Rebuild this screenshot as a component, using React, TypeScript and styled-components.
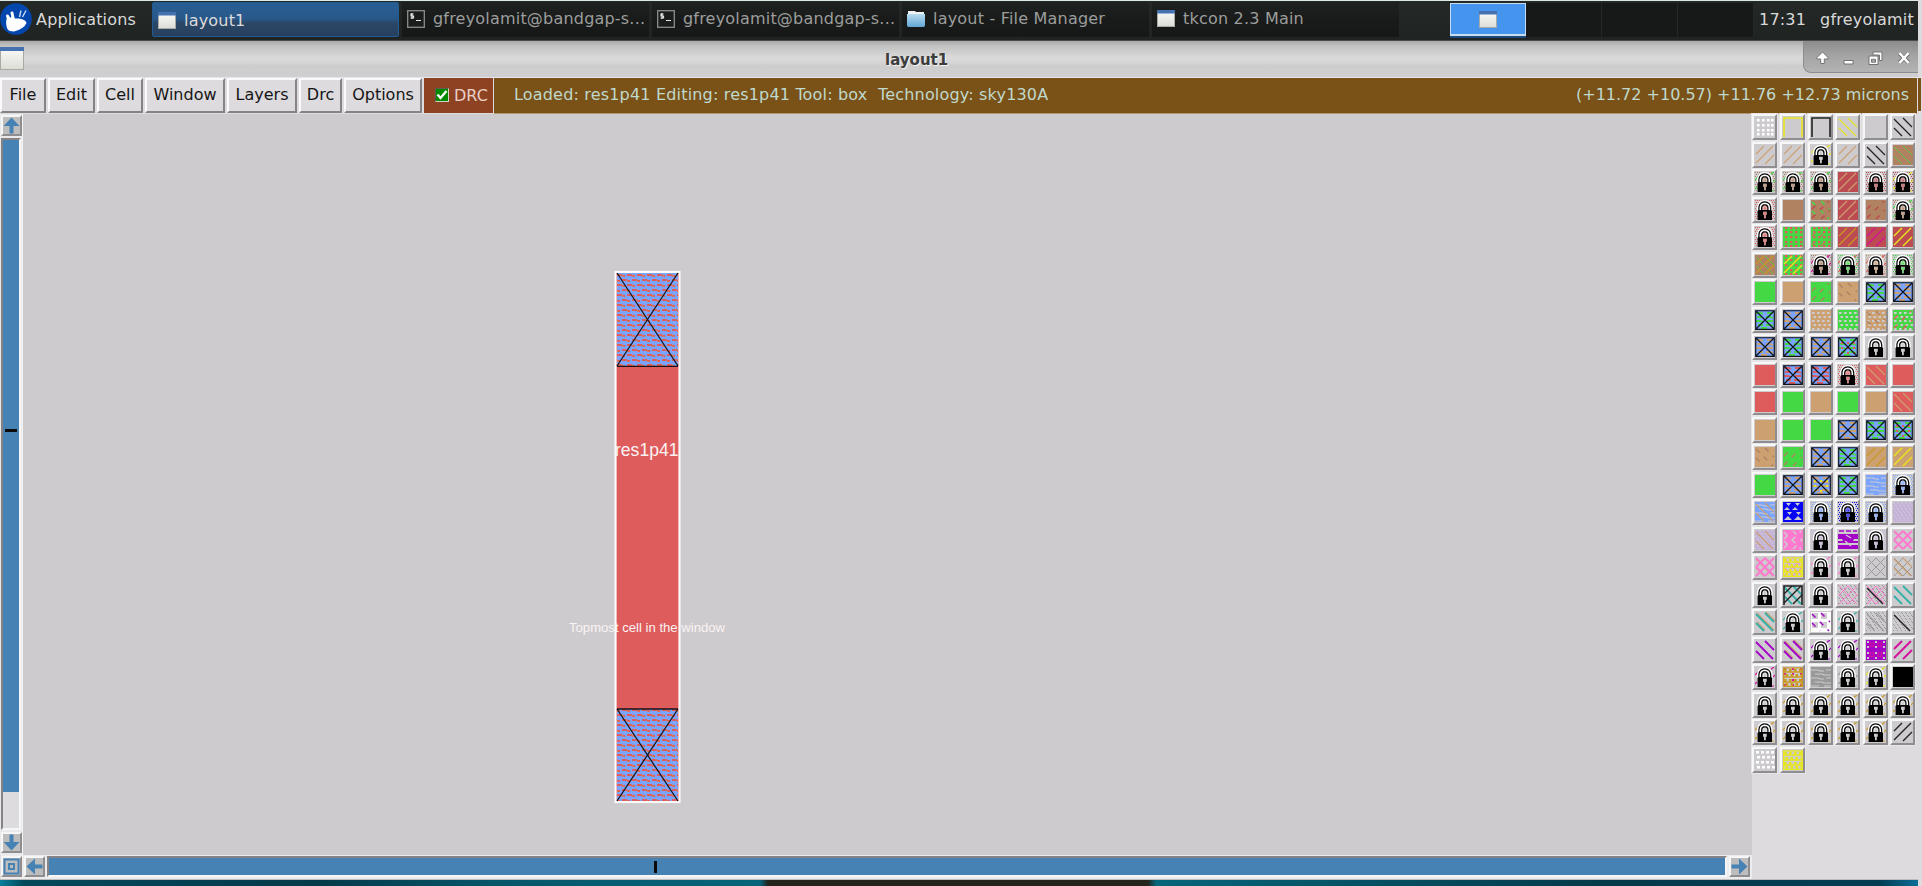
import React from "react";
import styled, { createGlobalStyle, css } from "styled-components";

const Global = createGlobalStyle`
  * { box-sizing: border-box; }
  html, body { margin: 0; padding: 0; overflow: hidden; }
  body { font-family: "DejaVu Sans", sans-serif; font-size: 16px; background: #dddbde; }
  svg { display: block; flex: none; }
`;

const Desktop = styled.div`
  display: grid;
  grid-template-rows: 41px 36px 37px 741px 25px 6px;
  width: 1922px;
  height: 886px;
  overflow: hidden;
  background: #dddbde;
`;

/* ---------- top panel ---------- */

const Panel = styled.header`
  display: flex;
  border-top: 1px solid #dce8e6;
  border-bottom: 1px solid #4a4a4a;
  background: linear-gradient(#242826, #1f2321);
  color: #d9d9d9;
  width: 1918px;
  letter-spacing: 0.2px;
`;

const AppsMenu = styled.div`
  display: flex;
  align-items: center;
  gap: 4px;
  width: 152px;
  padding-bottom: 3px;
`;

const TaskButton = styled.div<{ $active?: boolean }>`
  display: flex;
  align-items: center;
  width: 247px;
  height: 35px;
  margin: 1px 3px 0 0;
  padding: 0 0 2px 5px;
  gap: 8px;
  white-space: nowrap;
  color: #9c9d9c;
  background: linear-gradient(#1e2120 0%, #191b1a 50%, #161817 100%);
  ${(p) =>
    p.$active &&
    css`
      color: #dcdcdc;
      padding-top: 3px;
      border: 1px solid #215b93;
      border-radius: 2px;
      background: linear-gradient(#295e93 0%, #29588a 48%, #2a4768 60%, #28405e 100%);
    `}
`;

const Pager = styled.div`
  display: flex;
  margin-left: 48px;
  height: 36px;
`;

const PagerCell = styled.div<{ $active?: boolean }>`
  display: flex;
  align-items: center;
  justify-content: center;
  width: 76px;
  margin: 2px 0 0;
  height: 34px;
  background: #171918;
  border-right: 1px solid #252827;
  ${(p) =>
    p.$active &&
    css`
      height: 33px;
      border: 1px solid #c8dcf0;
      border-bottom-width: 2px;
      background: #4595ee;
      box-shadow: 0 2px 0 #1d4a7c;
    `}
`;

const PanelText = styled.div<{ $left: number }>`
  display: flex;
  align-items: center;
  padding-bottom: 3px;
  margin-left: ${(p) => p.$left}px;
  white-space: nowrap;
`;

/* ---------- title bar ---------- */

const TitleBar = styled.div`
  display: flex;
  width: 1918px;
  background: linear-gradient(#a9a9a9 0%, #c2c2c2 14%, #dadada 46%, #d4d4d4 62%, #cdcdcd 68%, #cfcfcf 100%);
`;

const TitleIcon = styled.div`
  width: 885px;
  padding-top: 6px;
`;

const Title = styled.div`
  padding-top: 10px;
  font-size: 15px;
  line-height: 18px;
  font-weight: bold;
  color: #3c3c3c;
  text-shadow: 1px 1px 0 #f2f2f2;
`;

const WindowButtons = styled.div`
  display: flex;
  align-items: center;
  justify-content: space-between;
  width: 115px;
  height: 32px;
  margin-left: auto;
  padding: 3px 7px 0 12px;
  border: 1px solid #8d8d8d;
  border-top: 0;
  border-right: 0;
  border-radius: 0 0 0 8px;
  background: linear-gradient(#8c8c8c, #a5a5a5 50%, #b3b3b3);
`;

/* ---------- menu row ---------- */

const MenuRow = styled.nav`
  display: flex;
  align-items: flex-start;
  gap: 2px;
  width: 1922px;
  border-top: 1px solid #e6e4ee;
  background: #dddbde;
`;

const MenuButton = styled.div<{ $w: number }>`
  width: ${(p) => p.$w}px;
  height: 35px;
  line-height: 30px;
  text-align: center;
  color: #151515;
  background: #dddbde;
  border: 2px solid;
  border-color: #fafafa #858385 #858385 #fafafa;
`;

const DrcToggle = styled.div`
  display: flex;
  align-items: center;
  gap: 5px;
  width: 69px;
  height: 35px;
  padding: 0 0 1px 11px;
  margin-right: -1px;
  color: #e9cfc6;
  background: #8d4222;
`;

const CheckBox = styled.div`
  width: 14px;
  height: 14px;
  background: #008a00;
  border: 1px solid #d5d5c5;
  border-color: #5d5a50 #d5d5c5 #d5d5c5 #5d5a50;
`;

const StatusBar = styled.div`
  display: flex;
  justify-content: space-between;
  width: 1423px;
  height: 36px;
  padding: 0 8px 0 20px;
  line-height: 34px;
  white-space: pre;
  color: #bfd9cd;
  background: #7a5117;
  border-bottom: 1px solid #b49672;
`;

const StatusText = styled.span`
  letter-spacing: 0.18px;
`;

const NextWindow = styled.div`
  width: 3px;
  height: 33px;
  margin-left: -1px;
  background: #7a5117;
`;

/* ---------- work area ---------- */

const WorkArea = styled.main`
  display: grid;
  grid-template-columns: 23px 1729px 170px;
`;

const VerticalBar = styled.div`
  display: flex;
  flex-direction: column;
  align-items: flex-start;
  gap: 2px;
  padding: 1px 0 0 1px;
  background: #e9e8ea;
  border-right: 1px solid #f4f4f4;
`;

const ArrowButton = styled.div`
  display: flex;
  align-items: center;
  justify-content: center;
  width: 21px;
  height: 21px;
  background: #bebdbe;
  border: 2px solid;
  border-color: #f6f6f6 #8f8d8f #8f8d8f #f6f6f6;
  flex: none;
`;

const VerticalTrough = styled.div`
  width: 20px;
  height: 692px;
  background: #dddbde;
  border: 2px solid;
  border-color: #858385 #f6f6f6 #f6f6f6 #858385;
`;

const VerticalThumb = styled.div`
  display: flex;
  align-items: center;
  justify-content: center;
  height: 652px;
  padding-bottom: 72px;
  background: #4682b4;
`;

const HorizontalBar = styled.div`
  display: flex;
  width: 1918px;
  padding: 0 0 0 1px;
  background: #dddbde;
  border-bottom: 1px solid #bcbcbc;
`;

const BarInner = styled.div`
  display: flex;
  gap: 2px;
  width: 1751px;
  height: 24px;
  padding-top: 1px;
  background: #ecebed;
`;

const HorizontalThumb = styled.div`
  width: 1680px;
  height: 21px;
  padding-left: 605px;
  display: flex;
  align-items: center;
  background: #4682b4;
  border: 2px solid;
  border-color: #858385 #f6f6f6 #f6f6f6 #858385;
`;

const Tick = styled.div<{ $w: number; $h: number }>`
  width: ${(p) => p.$w}px;
  height: ${(p) => p.$h}px;
  background: #0b0b0b;
`;

const Palette = styled.aside`
  display: grid;
  grid-template-columns: repeat(6, 27.6px);
  grid-auto-rows: 27.5px;
  align-content: start;
  padding-left: 0.4px;
  background: #dddbde;
`;

const Swatch = styled.div`
  width: 25px;
  height: 26px;
  padding: 1px 0 0 1px;
  background: #cdcbce;
  border: 2px solid;
  border-color: #f8f7f8 #8f8d8f #8f8d8f #f8f7f8;
  outline: 1px solid #e6e5e7;
`;

const BottomStrip = styled.div`
  width: 1918px;
  background: linear-gradient(90deg, #087f9c 0, #04485a 24px, #053a4a 320px, #06566a 500px, #06657a 760px, #23241c 768px, #23241c 1148px, #06657a 1156px, #053a4a 1600px, #043d52 1880px, #0a6d96 1918px);
`;

/* ---------- layer swatches ---------- */

const colors: Record<string, string> = {
  g: "#44d944", t: "#cda071", r: "#bd4c52", R: "#de5c5c", n: "#b08262", u: "#7ba4ff",
  y: "#e8e71c", k: "#222222", m: "#d4109c", p: "#a404c8", P: "#ff78cf", l: "#c5b2d8",
  B: "#0606f5", c: "#35b0a8", o: "#c99a22", z: "#999999", w: "#ffffff", h: "#cdcbce",
  K: "#000000",
};

// Every entry is a list of layers, each a kind and the letters of its colours.
const layers: string[] = (
  "dots4:w|corner:y|corner:k|back:y|none|backB:k|" +
  "fwd:t|fwd:t|lock:hy|fwd:t|backB:k|fill:n,backS:g|" +
  "lock:ng|lock:ng|lock:ng|fill:r,fwd:t|lock:rh|lock:ry|" +
  "lock:Rh|fill:n|fill:n,backD:g,fwdD:r|fill:r,fwd:t|fill:n,fwdD:r|lock:ng|" +
  "lock:Rh|fill:g,dots:R|fill:g,dots:R,fwdD:n|fill:r,fwd:o|fill:r,fwd:m|fill:r,fwdB:y|" +
  "fill:n,backS:g,fwd:o|fill:g,dots:R,fwdB:y|lock:nm|lock:gR|lock:tR|lock:gh|" +
  "fill:g|fill:t|fill:g,fwdD:n|fill:t,backD:n|cross:g|cross:t|" +
  "cross:g|cross:t|fill:t,holes:h|fill:g,holes:h|fill:t,holes:h,backD:n|fill:g,holes:h,fwdD:R|" +
  "cross:t|cross:g|cross:t|cross:gR|lock:hh|lock:hh|" +
  "fill:R|cross:R|cross:R|lock:Rh|fill:R,back:t|fill:R|" +
  "fill:R|fill:g|fill:t|fill:g|fill:t|fill:R,back:t|" +
  "fill:t|fill:g|fill:g|cross:t|cross:g|cross:gR|" +
  "fill:t,backD:n|fill:g,fwdD:n|cross:t|cross:g|fill:t,fwd:o|fill:t,fwdB:y|" +
  "fill:g|cross:t|cross:ty|cross:g|fill:u,waves:h|lock:uh|" +
  "fill:u,waves:h,back:t|tri:B|lock:uh|lock:Bh|lock:uh|fill:l,noise:h|" +
  "fill:l,noise:h,back:t|fill:P,fwdD:h,backD:h|lock:lh|bars:p|lock:lh|hatch:P|" +
  "back:t,hatch:P|hatchT:P,sieve:y|lock:hP|lock:hP|hatchT:z|hatchT:z,back:t|" +
  "lock:hh|backT:c,fwdB:k,corner:k|lock:hh|noise:z,hatchT:P|noise:z,hatchT:P,mid:k|backT:c|" +
  "backO:t,backT:c|lock:hc|fill:w,squares:h,backD:p|lock:hc|noise:z,back:z|noise:z,mid:k|" +
  "backT:p|backO:t,backT:p|lock:hp|lock:hp|fill:p,rings:m,spots:h|fwdT:m|" +
  "lock:hm|spots:m,sieve:o|fill:z,waves:h|lock:hz|lock:hy|fill:K|" +
  "lock:hh|lock:ho|lock:ho|lock:ho|lock:ho|lock:ho|" +
  "lock:ho|lock:ho|lock:ho|lock:ho|lock:ho|fwdB:k|" +
  "dots5:w|sieve:y"
).split("|");

const grid = (xs: number[], ys: number[], w: number, h: number, shift = 0) =>
  ys.map((y, j) => xs.map((x) => `M${x + (j % 2 ? shift : 0)} ${y}h${w}v${h}h-${w}z`).join("")).join("");

const BACK_MAIN = "M1 2L18 19M10 1L19 10M1 11L9 19";
const FWD_MAIN = "M1 18L18 1M1 9L9 1M10 19L19 10";
const LATTICE = "M1 1L19 19M10 1L19 10M1 10L10 19M1 19L19 1M1 10L10 1M10 19L19 10";
const SPECK = grid([0, 4, 8, 12, 16], [0, 3, 6, 9, 12, 15, 18], 1, 1, 2);
const SHACKLE = "M5.3 10.5V7.5Q5.8 3.4 9.8 3.2Q13.8 3.4 14.3 7.5V10.5";

function Padlock({ a, b }: { a: string; b: string }) {
  return (
    <>
      {a !== colors.h && <path d={grid([0, 2, 4, 6, 8, 10, 12, 14, 16, 18], [0, 2, 4, 6, 8, 10, 12, 14, 16, 18], 1, 1, 1)} fill={a} />}
      {b !== colors.h && <path d="M0 8L4 4M15 3L19 0M0 17L2 15M18 10L20 8M8 1L10 0M17 19h2" stroke={b} strokeWidth="1.2" />}
      <path d={SHACKLE} fill="none" stroke="#fafafa" strokeWidth="6.8" />
      <path d={SHACKLE} fill={a} fillOpacity=".5" stroke="#080808" strokeWidth="4" />
      <path d={SHACKLE} fill="none" stroke="#fff" strokeWidth="1.5" />
      <path d="M3.6 10H16L17 11V20H2.6V11Z" fill="#000" />
      <path d="M8 11.7h3.8v3h-1v3.6h-1.8v-3.6h-1z" fill={colors.h} />
      {a !== colors.h && <path d="M8 11.7h3.8v3h-1v3.6h-1.8v-3.6h-1z" fill={a} opacity=".6" />}
    </>
  );
}

function Contact({ a, b }: { a: string; b?: string }) {
  return (
    <>
      <rect width="20" height="20" fill={colors.u} />
      <path d="M1 3h5l2 1M12 3h6M2 7h5M11 7h4l3 1M1 11h4l3 1M12 11h6M3 15h5M11 15h5l2 1M6 18h6" stroke={a} strokeWidth="1.8" fill="none" />
      {b && <path d={grid([3, 9, 15], [5, 10, 15], 2, 2)} fill={b} />}
      <path d="M.7 .7H19.3V19.3H.7ZM1 1L19 19M19 1L1 19" fill="none" stroke="#10141c" strokeWidth="1.15" />
    </>
  );
}

function Layer({ kind, names }: { kind: string; names: string }) {
  const c = colors[names[0]];
  const line = (d: string, w: number, dash?: string) => (
    <path d={d} stroke={c} strokeWidth={w} strokeDasharray={dash} fill="none" />
  );
  switch (kind) {
    case "fill": return <rect width="20" height="20" fill={c} />;
    case "dots4": return <path d={grid([2, 7, 12, 16], [2, 7, 12, 16], 2.6, 2.6)} fill={c} />;
    case "dots": return <path d={grid([2, 7, 12, 17], [0, 4, 9, 14, 18], 2.4, 2.2)} fill={c} />;
    case "dots5": return <path d={grid([1, 6, 11, 16], [1, 6, 11, 16], 3, 2.6, 1)} fill={c} />;
    case "holes": return <path d={grid([1, 6, 11, 16], [2, 6, 10, 14, 18], 2.6, 2, 1.5)} fill={c} />;
    case "sieve": return (
      <>
        <path d="M.7 20V.9H19.3V20M0 5h20M0 10h20M0 15h20M0 19.5h20" stroke={c} strokeWidth="1.4" fill="none" />
        <path d={grid([1, 6, 11, 16], [2, 7, 12, 16], 2.6, 2.8, 1.5)} fill={c} />
      </>
    );
    case "bars": return (
      <>
        <path d="M1 1h5M8 1h5M15 1h4" stroke={c} strokeWidth="1.4" />
        <path d="M0 4h20v5h-4l-1 2h5v2H0v-2h5l-1-2H0zM0 15h20v4h-20z" fill={c} />
        <path d="M8 5l5 3M7 11l6 5" stroke={colors.h} strokeWidth="1.4" />
      </>
    );
    case "squares": return <path d={grid([1, 10], [1, 10], 6, 6)} fill={c} />;
    case "corner": return line("M1 20V1H19V20", 1.6);
    case "backS": return line(BACK_MAIN, 0.75);
    case "back": return line(BACK_MAIN, 1.1);
    case "backB": return line(BACK_MAIN, 1.3);
    case "backT": return line(BACK_MAIN, 1.8);
    case "backO": return line("M2 1L19 18M11 0L20 9M2 10L10 18", 1.4);
    case "fwd": return line(FWD_MAIN, 1.1);
    case "fwdB": return line(FWD_MAIN, 1.4);
    case "fwdT": return line(FWD_MAIN, 1.9);
    case "backD": return line(BACK_MAIN, 1.5, "5 6");
    case "fwdD": return line(FWD_MAIN, 1.5, "5 6");
    case "mid": return line("M1 3L17 19", 1.4);
    case "hatch": return line(LATTICE, 1.9);
    case "hatchT": return line(LATTICE, 1);
    case "waves": return line("M0 3h7l2 1h4M15 3h5M4 7h7l2 1h7M0 11h7l2 1h4M15 11h5M4 15h7l2 1h7M0 19h8M13 19h7", 1.2);
    case "noise": return <path d={SPECK + grid([1, 5, 9, 13, 17], [1, 4, 7, 10, 13, 16], 1, 1, 2)} fill={c} />;
    case "spots": return <path d={grid([1, 9, 17], [1, 6, 12, 17], 2, 2)} fill={c} />;
    case "rings": return <path d={grid([4, 12], [3, 13], 3.5, 3.5)} fill="none" stroke={c} strokeWidth="1.2" />;
    case "tri": return (
      <>
        <rect width="20" height="20" fill={c} />
        <path d="M3 1h5l-2.5 3zM12 1h5l-2.5 3zM1 8l3-3 3 3zM9 8l3-3 3 3zM4 10h5l-2.5 3zM13 10h5l-2.5 3zM1 18l4-4 4 4zM11 18l4-4 4 4z" fill={colors.h} />
      </>
    );
    case "lock": return <Padlock a={c} b={colors[names[1]]} />;
    case "cross": return <Contact a={c} b={colors[names[1]]} />;
    default: return null;
  }
}

function LayerSwatch({ spec }: { spec: string }) {
  return (
    <Swatch>
      <svg width="20" height="20" viewBox="0 0 20 20">
        {spec.split(",").map((part, i) => {
          const [kind, names = ""] = part.split(":");
          return <Layer key={i} kind={kind} names={names} />;
        })}
      </svg>
    </Swatch>
  );
}

/* ---------- icons ---------- */

function WindowIcon({ w = 18, h = 17 }: { w?: number; h?: number }) {
  return (
    <svg width={w} height={h} viewBox={`0 0 ${w} ${h}`}>
      <defs>
        <linearGradient id="paper" x2="0" y2="1"><stop stopColor="#fbfbfa" /><stop offset="1" stopColor="#dcddd7" /></linearGradient>
      </defs>
      <rect x=".5" y=".5" width={w - 1} height={h - 1} fill="url(#paper)" stroke="#a9aaa6" />
      <rect width={w} height={h > 20 ? 4 : 3.5} fill="#4672b0" />
    </svg>
  );
}

function TerminalIcon() {
  return (
    <svg width="18" height="18" viewBox="0 0 18 18">
      <rect x=".7" y=".7" width="16.6" height="16.6" fill="#1b1d1d" stroke="#8c8e8e" strokeWidth="1.3" />
      <path d="M6.5 4H4V6H6.5V8H3.5M5 3V9M9 10.5H14" stroke="#e6e6e6" strokeWidth="1.2" fill="none" />
    </svg>
  );
}

function FolderIcon() {
  return (
    <svg width="18" height="17" viewBox="0 0 18 17">
      <defs>
        <linearGradient id="folder" x2="0" y2="1"><stop stopColor="#b9dbf0" /><stop offset="1" stopColor="#62a6d6" /></linearGradient>
      </defs>
      <path d="M1 1H8L9 2H17V8H1Z" fill="#eef2f4" />
      <path d="M0 4H18V15.5L17 17H1L0 15.5Z" fill="url(#folder)" />
    </svg>
  );
}

function MouseLogo() {
  return (
    <svg width="32" height="32" viewBox="0 0 32 32">
      <circle cx="16" cy="16" r="15.8" fill="#0246ae" />
      <path d="M7.5 12L11 15L12 12.5L14.5 15.5H19Q26 16.5 26.5 20Q24 26 14 28.5Q8 28.5 7 25Q5.5 19.5 6.5 16.5Z" fill="#fff" />
      <path d="M12 10L13.5 17M7.5 13L9.5 18" stroke="#fff" strokeWidth="3" strokeLinecap="round" />
      <path d="M19.5 14L21 7.5M22.5 14L26 7.5" stroke="#c8dcfa" strokeWidth="1.4" />
    </svg>
  );
}

const turns = { up: 0, right: 90, down: 180, left: 270 };

function Arrow({ dir }: { dir: keyof typeof turns }) {
  return (
    <svg width="17" height="17" viewBox="0 0 17 17">
      <path transform={`rotate(${turns[dir]} 8.5 8.5)`} d="M8.5 .5L16.5 9H10.5V16.5H6.5V9H.5Z" fill="#4682b4" />
    </svg>
  );
}

function ControlIcons() {
  const stroke = { fill: "#fff", stroke: "#727272", strokeWidth: 1 };
  return (
    <>
      <svg width="13" height="14" viewBox="0 0 13 14"><path {...stroke} d="M6.5 1L12 6.5V8H8.3V12.5H4.7V8H1V6.5Z" /></svg>
      <svg width="11" height="16" viewBox="0 0 11 16"><path {...stroke} d="M1 10.5H10V14H1Z" /></svg>
      <svg width="15" height="15" viewBox="0 0 15 15">
        <path {...stroke} d="M5 1H14V9.5H11.5V4H5Z" />
        <path {...stroke} fillRule="evenodd" d="M1 5H10V13.5H1ZM3.5 8.3V11.2H7.5V8.3Z" />
      </svg>
      <svg width="14" height="14" viewBox="0 0 14 14">
        <path d="M2.5 2.5L11.5 11.5M11.5 2.5L2.5 11.5" stroke="#727272" strokeWidth="4" />
        <path d="M2.5 2L11.5 12M11.5 2L2.5 12" stroke="#fff" strokeWidth="2.5" />
      </svg>
    </>
  );
}

/* ---------- drawing canvas ---------- */

function CellDrawing() {
  return (
    <svg width="1729" height="741" viewBox="23 114 1729 741">
      <defs>
        <pattern id="contact" x="617" y="273" width="10" height="10" patternUnits="userSpaceOnUse">
          <rect width="10" height="10" fill="#7ba4ff" />
          <path d="M0 2H4.5L6 3H8M5 7H9.5L10 7.3M0 7.3L1 8H3" stroke="#de5c5c" strokeWidth="2" fill="none" />
          <path d="M4.5 1.5L7 4M9 6.5L10 7.5M0 7.5L1.5 9" stroke="#c9925f" strokeWidth="1" />
        </pattern>
      </defs>
      <rect x="23" y="114" width="1729" height="741" fill="#cdcbce" />
      <rect x="615.5" y="272" width="64" height="530" fill="#de5c5c" stroke="#fbfafa" strokeWidth="2.2" />
      <rect x="617" y="273" width="61" height="93" fill="url(#contact)" />
      <rect x="617" y="709" width="61" height="92" fill="url(#contact)" />
      <path d="M617 366.3H678M617 273L678 366M678 273L617 366M617 709H678M617 709L678 801M678 709L617 801" stroke="#15151a" strokeWidth="1.3" />
      <g fill="#fbf3f4" fontFamily="Liberation Sans, Arial, sans-serif">
        <text x="615" y="455.5" fontSize="17.6" textLength="63.5" lengthAdjust="spacingAndGlyphs">res1p41</text>
        <text x="569" y="632" fontSize="13" textLength="156" lengthAdjust="spacingAndGlyphs">Topmost cell in the window</text>
      </g>
    </svg>
  );
}

const menus: [string, number][] = [
  ["File", 46], ["Edit", 47], ["Cell", 46], ["Window", 80], ["Layers", 70], ["Drc", 43], ["Options", 78],
];

export default function App() {
  return (
    <Desktop>
      <Global />
      <Panel>
        <AppsMenu><MouseLogo />Applications</AppsMenu>
        <TaskButton $active><WindowIcon />layout1</TaskButton>
        <TaskButton><TerminalIcon />gfreyolamit@bandgap-s...</TaskButton>
        <TaskButton><TerminalIcon />gfreyolamit@bandgap-s...</TaskButton>
        <TaskButton><FolderIcon />layout - File Manager</TaskButton>
        <TaskButton><WindowIcon />tkcon 2.3 Main</TaskButton>
        <Pager>
          <PagerCell $active><WindowIcon /></PagerCell>
          <PagerCell /><PagerCell /><PagerCell />
        </Pager>
        <PanelText $left={5}>17:31</PanelText>
        <PanelText $left={14}>gfreyolamit</PanelText>
      </Panel>

      <TitleBar>
        <TitleIcon><WindowIcon w={24} h={23} /></TitleIcon>
        <Title>layout1</Title>
        <WindowButtons><ControlIcons /></WindowButtons>
      </TitleBar>

      <MenuRow>
        {menus.map(([name, w]) => <MenuButton key={name} $w={w}>{name}</MenuButton>)}
        <DrcToggle>
          <CheckBox>
            <svg width="12" height="12" viewBox="0 0 12 12"><path d="M1.5 5.5L4.5 9L10.5 2" stroke="#fff" strokeWidth="2.4" fill="none" /></svg>
          </CheckBox>
          DRC
        </DrcToggle>
        <StatusBar>
          <StatusText>Loaded: res1p41 Editing: res1p41 Tool: box  Technology: sky130A</StatusText>
          <span>(+11.72 +10.57) +11.76 +12.73 microns</span>
        </StatusBar>
        <NextWindow />
      </MenuRow>

      <WorkArea>
        <VerticalBar>
          <ArrowButton><Arrow dir="up" /></ArrowButton>
          <VerticalTrough><VerticalThumb><Tick $w={12} $h={3} /></VerticalThumb></VerticalTrough>
          <ArrowButton><Arrow dir="down" /></ArrowButton>
        </VerticalBar>
        <CellDrawing />
        <Palette>
          {layers.map((spec, i) => <LayerSwatch key={i} spec={spec} />)}
        </Palette>
      </WorkArea>

      <HorizontalBar>
        <BarInner>
          <ArrowButton>
            <svg width="17" height="17" viewBox="0 0 17 17">
              <rect x="1.5" y="1.5" width="14" height="14" fill="none" stroke="#4682b4" strokeWidth="2" />
              <rect x="6" y="6" width="5" height="5" fill="none" stroke="#4682b4" strokeWidth="2" />
            </svg>
          </ArrowButton>
          <ArrowButton><Arrow dir="left" /></ArrowButton>
          <HorizontalThumb><Tick $w={3} $h={12} /></HorizontalThumb>
          <ArrowButton><Arrow dir="right" /></ArrowButton>
        </BarInner>
      </HorizontalBar>
      <BottomStrip />
    </Desktop>
  );
}
